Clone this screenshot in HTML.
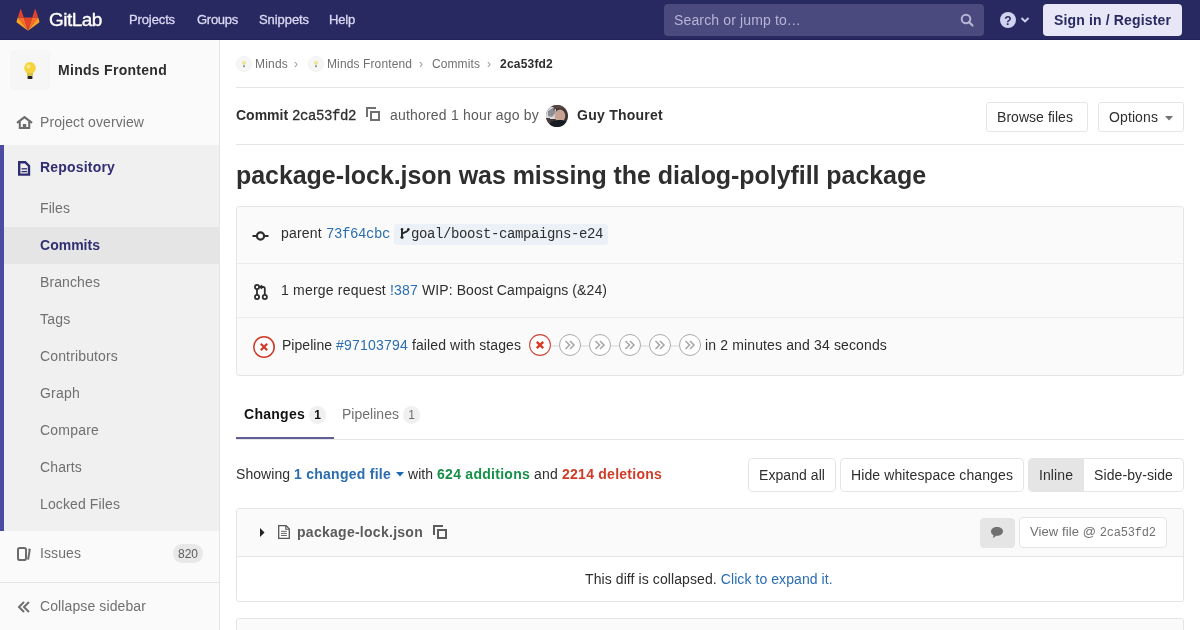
<!DOCTYPE html>
<html><head><meta charset="utf-8">
<style>
*{box-sizing:border-box;margin:0;padding:0}
html,body{width:1200px;height:630px;overflow:hidden;background:#fff}
body{font-family:"Liberation Sans",sans-serif;font-size:14px;color:#2e2e2e;position:relative}
.a{position:absolute;white-space:nowrap;line-height:16px}
.m{font-family:"Liberation Mono",monospace}
.b{font-weight:bold}
.lk{color:#2a6db0}
/* navbar */
#nav{position:absolute;left:0;top:0;width:1200px;height:40px;background:#292961;border-bottom:1px solid #23215a}
#nav .lnk{color:#dadaf5;font-size:13px;-webkit-text-stroke:0.3px #dadaf5;top:12px}
#search{position:absolute;left:664px;top:4px;width:320px;height:32px;background:#4a4a7e;border-radius:4px}
#signin{position:absolute;left:1043px;top:4px;width:139px;height:32px;background:#e8e7f7;border-radius:4px}
/* sidebar */
#side{position:absolute;left:0;top:40px;width:220px;height:590px;background:#fafafa;border-right:1px solid #e5e5e5}
.si{color:#707070}
#repo{position:absolute;left:0;top:145px;width:219px;height:386px;background:#f0f0f0;border-left:4px solid #4b4ba3}
#act{position:absolute;left:4px;top:227px;width:215px;height:37px;background:#e5e5e5}
.hr{position:absolute;height:1px;background:#e5e5e5}
.box{position:absolute;border:1px solid #e5e5e5;border-radius:3px}
.btn{position:absolute;border:1px solid #e5e5e5;border-radius:4px;background:#fff}
.badge{position:absolute;background:#f0f0f0;border-radius:9px;height:18px;line-height:18px;text-align:center;font-size:12px}
.stage{position:absolute;top:334px;width:22px;height:22px;border:1px solid #ababab;border-radius:50%;background:#fff}
.conn{position:absolute;top:345px;height:2px;width:8px;background:#e8e8e8}
</style></head><body>
<div id="root" style="position:absolute;left:0;top:0;width:1200px;height:630px;will-change:transform">
<div id="nav">
  <svg class="a" style="left:16px;top:8px" width="24" height="24" viewBox="0 0 36 36">
    <path fill="#e24329" d="M18 34.1l6.4-19.8H11.6z"/>
    <path fill="#fc6d26" d="M18 34.1l-6.4-19.8H2.7z"/>
    <path fill="#fca326" d="M2.7 14.3L.8 20.3c-.2.5 0 1.1.5 1.4L18 34.1z"/>
    <path fill="#e24329" d="M2.7 14.3h8.9L7.8 2.5c-.2-.6-1.1-.6-1.3 0z"/>
    <path fill="#fc6d26" d="M18 34.1l6.4-19.8h8.9z"/>
    <path fill="#fca326" d="M33.3 14.3l1.9 6c.2.5 0 1.1-.5 1.4L18 34.1z"/>
    <path fill="#e24329" d="M33.3 14.3h-8.9l3.8-11.8c.2-.6 1.1-.6 1.3 0z"/>
  </svg>
  <div class="a" style="left:49px;top:8.5px;color:#fff;font-size:19px;line-height:22px;letter-spacing:-0.55px;-webkit-text-stroke:0.35px #fff">GitLab</div>
  <div class="a lnk" style="left:129px"><span style="letter-spacing:-0.120px">Projects</span></div>
  <div class="a lnk" style="left:197px"><span style="letter-spacing:-0.272px">Groups</span></div>
  <div class="a lnk" style="left:259px"><span style="letter-spacing:-0.074px">Snippets</span></div>
  <div class="a lnk" style="left:329px"><span style="letter-spacing:-0.184px">Help</span></div>
  <div id="search"></div>
  <div class="a" style="left:674px;top:12px;color:#b5b5d6"><span style="letter-spacing:0.139px">Search or jump to…</span></div>
  <svg class="a" style="left:960px;top:13px" width="14" height="14" viewBox="0 0 14 14"><circle cx="6" cy="6" r="4.3" fill="none" stroke="#b5b5d6" stroke-width="2"/><path d="M9 9l3.5 3.5" stroke="#b5b5d6" stroke-width="2.2" stroke-linecap="round"/></svg>
  <svg class="a" style="left:1000px;top:12px" width="16" height="16" viewBox="0 0 16 16"><circle cx="8" cy="8" r="8" fill="#d1d1f0"/><text x="8" y="12.5" text-anchor="middle" font-family="Liberation Sans" font-weight="bold" font-size="12" fill="#292961">?</text></svg>
  <svg class="a" style="left:1020px;top:16px" width="10" height="8" viewBox="0 0 10 8"><path d="M1.5 2l3.5 3.5L8.5 2" fill="none" stroke="#d1d1f0" stroke-width="1.9"/></svg>
  <div id="signin"></div>
  <div class="a b" style="left:1054px;top:12px;color:#292961"><span style="letter-spacing:0.147px">Sign in / Register</span></div>
</div>

<div id="side">
  <div style="position:absolute;left:10px;top:10px;width:40px;height:40px;background:#f6f6f6;border-radius:4px"></div>
  <svg class="a" style="left:22px;top:21px" width="16" height="19" viewBox="0 0 16 19"><ellipse cx="8" cy="7" rx="5.8" ry="6" fill="#f5d33c"/><ellipse cx="6.5" cy="5.5" rx="2" ry="2" fill="#fae98a"/><path d="M5 12h6v3H5z" fill="#d9c04a"/><rect x="5.5" y="15" width="5" height="3" rx="1" fill="#222"/></svg>
  <div class="a b" style="left:58px;top:22px;color:#2e2e2e"><span style="letter-spacing:0.287px">Minds Frontend</span></div>
  <svg class="a" style="left:16px;top:76px" width="17" height="13" viewBox="0 0 17 13"><path d="M1 6.8L8.5 1.2 16 6.8" fill="none" stroke="#6b6b6b" stroke-width="2.2"/><path d="M3.8 5.5V12h9.4V5.5" fill="none" stroke="#6b6b6b" stroke-width="2"/><rect x="6.8" y="8" width="3.4" height="4.5" fill="#6b6b6b"/></svg>
  <div class="a si" style="left:40px;top:74px"><span style="letter-spacing:0.081px">Project overview</span></div>
</div>
<div id="repo"></div>
<div id="act"></div>
<svg class="a" style="left:17px;top:160px" width="14" height="16" viewBox="0 0 14 16"><path d="M2.2 2.2h6L12 6v8.6H2.2z" fill="none" stroke="#2f2d72" stroke-width="2.4"/><path d="M4.5 8.8h5.5" stroke="#2f2d72" stroke-width="1.3"/><path d="M4.5 11.6h5.5" stroke="#2f2d72" stroke-width="1.3"/></svg>
<div class="a b" style="left:40px;top:159px;color:#302e72"><span style="letter-spacing:0.188px">Repository</span></div>
<div class="a si" style="left:40px;top:200px"><span style="letter-spacing:0.088px">Files</span></div>
<div class="a b" style="left:40px;top:237px;color:#302e72"><span style="letter-spacing:0.015px">Commits</span></div>
<div class="a si" style="left:40px;top:274px"><span style="letter-spacing:0.107px">Branches</span></div>
<div class="a si" style="left:40px;top:311px"><span style="letter-spacing:0.219px">Tags</span></div>
<div class="a si" style="left:40px;top:348px"><span style="letter-spacing:0.145px">Contributors</span></div>
<div class="a si" style="left:40px;top:385px"><span style="letter-spacing:0.218px">Graph</span></div>
<div class="a si" style="left:40px;top:422px"><span style="letter-spacing:0.203px">Compare</span></div>
<div class="a si" style="left:40px;top:459px"><span style="letter-spacing:0.128px">Charts</span></div>
<div class="a si" style="left:40px;top:496px"><span style="letter-spacing:0.117px">Locked Files</span></div>
<svg class="a" style="left:17px;top:547px" width="14" height="14" viewBox="0 0 14 14"><rect x="1" y="1" width="8" height="12" rx="1.8" fill="none" stroke="#6b6b6b" stroke-width="2"/><path d="M11.5 2.2l1.2 0.6-1.6 9.8" fill="none" stroke="#6b6b6b" stroke-width="2"/></svg>
<div class="a si" style="left:40px;top:545px"><span style="letter-spacing:0.090px">Issues</span></div>
<div class="badge" style="left:173px;top:544px;width:30px;height:19px;line-height:20px;color:#5c5c5c;background:#e8e8e8">820</div>
<div class="hr" style="left:0;top:582px;width:219px"></div>
<svg class="a" style="left:17px;top:601px" width="14" height="12" viewBox="0 0 14 12"><path d="M7 1L2 6l5 5M12 1L7 6l5 5" fill="none" stroke="#707070" stroke-width="2"/></svg>
<div class="a si" style="left:40px;top:598px"><span style="letter-spacing:0.107px">Collapse sidebar</span></div>

<!-- content -->
<svg class="a" style="left:236px;top:56px" width="16" height="16" viewBox="0 0 16 16"><circle cx="8" cy="8" r="7.6" fill="#f6f6f6" stroke="#efefef" stroke-width="0.8"/><ellipse cx="8" cy="7" rx="2.2" ry="2" fill="#ede59a"/><rect x="7.1" y="9.3" width="1.8" height="1.8" fill="#8a8a8a"/></svg>
<div class="a si" style="left:255px;top:56px;font-size:12px"><span style="letter-spacing:0.198px">Minds</span></div>
<div class="a si" style="left:294px;top:56px;font-size:12px;color:#9a9a9a">›</div>
<svg class="a" style="left:308px;top:56px" width="16" height="16" viewBox="0 0 16 16"><circle cx="8" cy="8" r="7.6" fill="#f6f6f6" stroke="#efefef" stroke-width="0.8"/><ellipse cx="8" cy="7" rx="2.2" ry="2" fill="#ede59a"/><rect x="7.1" y="9.3" width="1.8" height="1.8" fill="#8a8a8a"/></svg>
<div class="a si" style="left:327px;top:56px;font-size:12px"><span style="letter-spacing:0.116px">Minds Frontend</span></div>
<div class="a si" style="left:419px;top:56px;font-size:12px;color:#9a9a9a">›</div>
<div class="a si" style="left:432px;top:56px;font-size:12px"><span style="letter-spacing:0.095px">Commits</span></div>
<div class="a si" style="left:487px;top:56px;font-size:12px;color:#9a9a9a">›</div>
<div class="a b" style="left:500px;top:56px;font-size:12px;color:#2e2e2e"><span style="letter-spacing:0.204px">2ca53fd2</span></div>
<div class="hr" style="left:236px;top:87px;width:948px"></div>

<div class="a b" style="left:236px;top:107px"><span style="letter-spacing:0.000px">Commit </span><span class="m" style="font-size:14px;font-weight:normal;-webkit-text-stroke:0.3px #2e2e2e"><span style="letter-spacing:-0.401px">2ca53fd2</span></span></div>
<svg class="a" style="left:366px;top:107px" width="14" height="14" viewBox="0 0 14 14"><path d="M1 10V1h9" fill="none" stroke="#707070" stroke-width="2"/><rect x="5" y="5" width="8" height="8" fill="none" stroke="#707070" stroke-width="2"/></svg>
<div class="a" style="left:390px;top:107px;color:#5c5c5c"><span style="letter-spacing:0.192px">authored 1 hour ago by</span></div>
<svg class="a" style="left:546px;top:105px" width="22" height="22" viewBox="0 0 22 22"><defs><clipPath id="cp"><circle cx="11" cy="11" r="11"/></clipPath></defs><g clip-path="url(#cp)"><rect width="22" height="22" fill="#3b3434"/><path d="M0 2h10v12H0z" fill="#d8d8dc"/><path d="M2 6l5-3 3 4-4 5-4-1z" fill="#8d8f96"/><ellipse cx="14" cy="11" rx="5.3" ry="6.5" fill="#c8a394"/><path d="M7.5 7c0-5 13-5 13 0v-7h-13z" fill="#5b4742"/><path d="M3 22c0-5 5-7 11-7s8 2 8 7z" fill="#161b24"/><path d="M0 13h4v9H0z" fill="#4a3a38"/></g></svg>
<div class="a b" style="left:577px;top:107px"><span style="letter-spacing:0.253px">Guy Thouret</span></div>
<div class="btn" style="left:986px;top:102px;width:102px;height:30px;border-radius:3px"></div>
<div class="a" style="left:997px;top:109px"><span style="letter-spacing:0.044px">Browse files</span></div>
<div class="btn" style="left:1098px;top:102px;width:86px;height:30px;border-radius:3px"></div>
<div class="a" style="left:1109px;top:109px"><span style="letter-spacing:0.107px">Options</span></div>
<svg class="a" style="left:1165px;top:116px" width="8" height="5" viewBox="0 0 8 5"><path d="M0 0h8L4 4.5z" fill="#707070"/></svg>
<div class="hr" style="left:236px;top:144px;width:948px"></div>

<div class="a b" style="left:236px;top:161px;font-size:25px;line-height:28px;"><span style="letter-spacing:-0.057px">package-lock.json was missing the dialog-polyfill package</span></div>

<div class="box" style="left:236px;top:206px;width:948px;height:170px;background:#fafafa"></div>
<div class="hr" style="left:237px;top:263px;width:946px;background:#ececec"></div>
<div class="hr" style="left:237px;top:317px;width:946px;background:#ececec"></div>
<svg class="a" style="left:252px;top:230px" width="17" height="12" viewBox="0 0 17 12"><path d="M0.5 6h4M12.5 6h4" stroke="#2e2e2e" stroke-width="2.2"/><circle cx="8.5" cy="6" r="3.6" fill="none" stroke="#2e2e2e" stroke-width="2.2"/></svg>
<div class="a" style="left:281px;top:225px"><span style="letter-spacing:0.202px">parent </span><span class="m lk" style="font-size:14px"><span style="letter-spacing:-0.401px">73f64cbc</span></span></div>
<div style="position:absolute;left:394px;top:224px;width:214px;height:21px;background:#ecf1f7;border-radius:3px"></div>
<svg class="a" style="left:399px;top:227px" width="12" height="13" viewBox="0 0 12 13"><path d="M3 2.2v8.3" fill="none" stroke="#262626" stroke-width="1.9"/><circle cx="3" cy="2.2" r="1.25" fill="#262626"/><circle cx="9.3" cy="2.2" r="1.25" fill="#262626"/><circle cx="3" cy="10.3" r="1.5" fill="#262626"/><path d="M3 7.3C3.5 5.2 9.3 5.5 9.3 2.2" fill="none" stroke="#262626" stroke-width="1.8"/></svg>
<div class="a" style="left:411px;top:225px"><span class="m" style="font-size:14px"><span style="letter-spacing:-0.401px">goal/boost-campaigns-e24</span></span></div>

<svg class="a" style="left:253px;top:284px" width="16" height="17" viewBox="0 0 16 17"><circle cx="4" cy="3" r="2.1" fill="none" stroke="#2e2e2e" stroke-width="1.8"/><circle cx="4" cy="13" r="2.1" fill="none" stroke="#2e2e2e" stroke-width="1.8"/><circle cx="11.8" cy="13" r="2.1" fill="none" stroke="#2e2e2e" stroke-width="1.8"/><path d="M4 5v6" stroke="#2e2e2e" stroke-width="1.8"/><path d="M11.8 11V4.5c0-.8-.7-1.5-1.5-1.5H7.5" fill="none" stroke="#2e2e2e" stroke-width="1.8"/><path d="M9 1.2L7 3l2 1.8" fill="none" stroke="#2e2e2e" stroke-width="1.5"/></svg>
<div class="a" style="left:281px;top:282px"><span style="letter-spacing:0.198px">1 merge request </span><span class="lk"><span style="letter-spacing:0.188px">!387</span></span><span style="letter-spacing:0.084px"> WIP: Boost Campaigns (&amp;24)</span></div>

<svg class="a" style="left:253px;top:336px" width="22" height="22" viewBox="0 0 22 22"><circle cx="11" cy="11" r="10.2" fill="#fff" stroke="#cf3a2a" stroke-width="1.6"/><path d="M7.8 7.8l6.4 6.4M14.2 7.8l-6.4 6.4" stroke="#cf3a2a" stroke-width="2.2"/></svg>
<div class="a" style="left:282px;top:337px"><span style="letter-spacing:0.033px">Pipeline </span><span class="lk"><span style="letter-spacing:0.214px">#97103794</span></span><span style="letter-spacing:0.090px"> failed with stages</span></div>
<svg class="a" style="left:529px;top:334px" width="22" height="22" viewBox="0 0 22 22"><circle cx="11" cy="11" r="10.4" fill="#fff" stroke="#d0473a" stroke-width="1.1"/><path d="M7.8 7.8l6.4 6.4M14.2 7.8l-6.4 6.4" stroke="#db3b21" stroke-width="2.4"/></svg>
<div class="conn" style="left:551px"></div>
<div class="stage" style="left:559px"></div>
<div class="conn" style="left:581px"></div>
<div class="stage" style="left:589px"></div>
<div class="conn" style="left:611px"></div>
<div class="stage" style="left:619px"></div>
<div class="conn" style="left:641px"></div>
<div class="stage" style="left:649px"></div>
<div class="conn" style="left:671px"></div>
<div class="stage" style="left:679px"></div>
<svg class="a" style="left:564px;top:340px" width="12" height="10" viewBox="0 0 12 10"><path d="M1.5 1l4 4-4 4M6 1l4 4-4 4" fill="none" stroke="#a7a7a7" stroke-width="1.6"/></svg>
<svg class="a" style="left:594px;top:340px" width="12" height="10" viewBox="0 0 12 10"><path d="M1.5 1l4 4-4 4M6 1l4 4-4 4" fill="none" stroke="#a7a7a7" stroke-width="1.6"/></svg>
<svg class="a" style="left:624px;top:340px" width="12" height="10" viewBox="0 0 12 10"><path d="M1.5 1l4 4-4 4M6 1l4 4-4 4" fill="none" stroke="#a7a7a7" stroke-width="1.6"/></svg>
<svg class="a" style="left:654px;top:340px" width="12" height="10" viewBox="0 0 12 10"><path d="M1.5 1l4 4-4 4M6 1l4 4-4 4" fill="none" stroke="#a7a7a7" stroke-width="1.6"/></svg>
<svg class="a" style="left:684px;top:340px" width="12" height="10" viewBox="0 0 12 10"><path d="M1.5 1l4 4-4 4M6 1l4 4-4 4" fill="none" stroke="#a7a7a7" stroke-width="1.6"/></svg>
<div class="a" style="left:705px;top:337px"><span style="letter-spacing:0.140px">in 2 minutes and 34 seconds</span></div>

<!-- tabs -->
<div class="a b" style="left:244px;top:406px;color:#111"><span style="letter-spacing:0.268px">Changes</span></div>
<div class="badge" style="left:309px;top:406px;width:17px;color:#111;font-weight:bold">1</div>
<div class="a si" style="left:342px;top:406px"><span style="letter-spacing:0.021px">Pipelines</span></div>
<div class="badge" style="left:403px;top:406px;width:17px;color:#707070">1</div>
<div class="hr" style="left:236px;top:439px;width:948px"></div>
<div style="position:absolute;left:236px;top:437px;width:98px;height:2px;background:#5e5e98"></div>

<div class="a" style="left:236px;top:466px"><span style="letter-spacing:0.051px">Showing </span><span class="b lk"><span style="letter-spacing:0.260px">1 changed file</span></span></div>
<svg class="a" style="left:396px;top:472px" width="8" height="5" viewBox="0 0 8 5"><path d="M0 0h8L4 4.5z" fill="#1b69b6"/></svg>
<div class="a" style="left:408px;top:466px"><span style="letter-spacing:0.043px">with </span><span class="b" style="color:#168f48"><span style="letter-spacing:0.272px">624 additions</span></span><span style="letter-spacing:0.172px"> and </span><span class="b" style="color:#cf3d27"><span style="letter-spacing:0.251px">2214 deletions</span></span></div>
<div class="btn" style="left:748px;top:458px;width:88px;height:34px"></div>
<div class="a" style="left:759px;top:467px"><span style="letter-spacing:0.062px">Expand all</span></div>
<div class="btn" style="left:840px;top:458px;width:184px;height:34px"></div>
<div class="a" style="left:851px;top:467px"><span style="letter-spacing:0.107px">Hide whitespace changes</span></div>
<div class="btn" style="left:1028px;top:458px;width:156px;height:34px;overflow:hidden"><div style="position:absolute;left:0;top:0;width:55px;height:32px;background:#e5e5e5"></div></div>
<div class="a" style="left:1039px;top:467px"><span style="letter-spacing:0.089px">Inline</span></div>
<div class="a" style="left:1094px;top:467px"><span style="letter-spacing:0.099px">Side-by-side</span></div>

<!-- file -->
<div class="box" style="left:236px;top:508px;width:948px;height:94px"></div>
<div style="position:absolute;left:237px;top:509px;width:946px;height:48px;background:#fafafa;border-bottom:1px solid #e5e5e5;border-radius:2px 2px 0 0"></div>
<svg class="a" style="left:260px;top:528px" width="5" height="9" viewBox="0 0 5 9"><path d="M0 0L4.5 4.5 0 9z" fill="#222"/></svg>
<svg class="a" style="left:278px;top:525px" width="12" height="14" viewBox="0 0 12 14"><path d="M0.7 0.7h7.4l3.2 3.2v9.4H0.7z" fill="#fff" stroke="#555" stroke-width="1.3"/><path d="M7.8 0.7v3.5h3.5" fill="none" stroke="#555" stroke-width="1.1"/><path d="M3 6.3h5.8M3 8.4h5.8M3 10.5h5.8" stroke="#555" stroke-width="0.9"/></svg>
<div class="a b" style="left:297px;top:524px;color:#5c5c5c"><span style="letter-spacing:0.272px">package-lock.json</span></div>
<svg class="a" style="left:433px;top:525px" width="14" height="14" viewBox="0 0 14 14"><path d="M1 10V1h9" fill="none" stroke="#5c5c5c" stroke-width="2"/><rect x="5" y="5" width="8" height="8" fill="none" stroke="#5c5c5c" stroke-width="2"/></svg>
<div class="btn" style="left:980px;top:518px;width:35px;height:30px;background:#e5e5e5;border-color:#e5e5e5"></div>
<svg class="a" style="left:990px;top:526px" width="14" height="13" viewBox="0 0 14 13"><path d="M7 1C3.5 1 1 3 1 5.5c0 1.6 1 2.9 2.5 3.7L3 12l3.5-2.2c.2 0 .3 0 .5 0 3.5 0 6-2 6-4.5S10.5 1 7 1z" fill="#707070"/></svg>
<div class="btn" style="left:1019px;top:517px;width:148px;height:31px"></div>
<div class="a" style="left:1030px;top:524px;font-size:13px;color:#707070"><span style="letter-spacing:0.098px">View file @ </span><span class="m" style="font-size:12px"><span style="letter-spacing:-0.201px">2ca53fd2</span></span></div>

<div class="a" style="left:585px;top:571px"><span style="letter-spacing:0.090px">This diff is collapsed. </span><span class="lk"><span style="letter-spacing:0.079px">Click to expand it.</span></span></div>
<div class="box" style="left:236px;top:618px;width:948px;height:40px;background:#fafafa"></div>
</div>
</body></html>
